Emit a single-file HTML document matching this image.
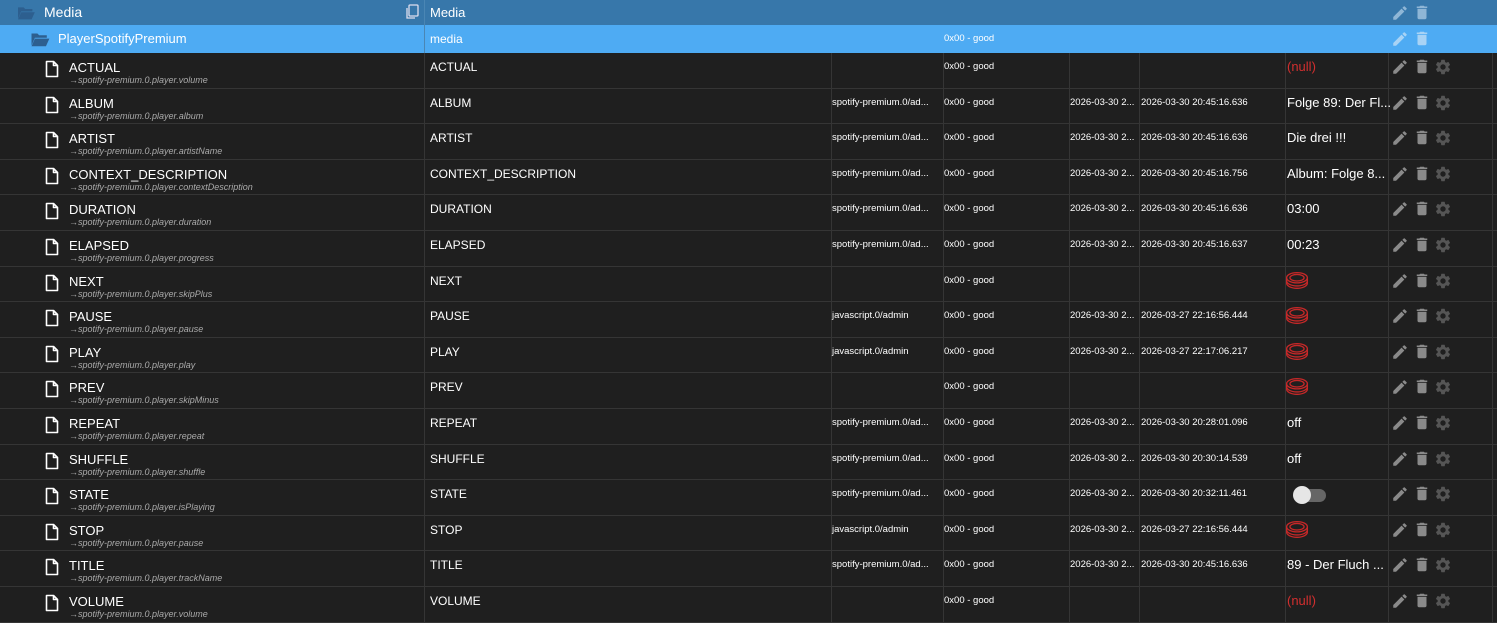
<!DOCTYPE html>
<html><head><meta charset="utf-8"><style>
*{margin:0;padding:0;box-sizing:border-box}
body{width:1497px;height:623px;background:#1f1f1f;font-family:"Segoe UI","Liberation Sans",sans-serif;color:#fff;overflow:hidden;position:relative}
.r{position:absolute;left:0;width:1497px;border-bottom:1px solid #353535}
.v{position:absolute;top:0;bottom:0;width:1px;background:#353535}
.t{position:absolute;white-space:nowrap;line-height:1}
.n{font-size:13px;left:69px;top:8px}
.s{font-size:9px;left:69px;top:23px;color:#aaa;font-style:italic}
.c2{font-size:12px;left:430px;top:8px}
.sm{font-size:9.5px;top:9px}
.val{font-size:13px;left:1287px;top:7px}
.null{color:#d32f2f}
.fi{position:absolute;left:45px;top:7px}
.ic{position:absolute;top:5px}
</style></head><body>
<svg width="0" height="0" style="position:absolute"><defs>
<symbol id="file" viewBox="0 0 14 18"><path d="M1.5 1.5h7l4 4v11h-11z M8.5 1.5v4h4" fill="none" stroke="#fff" stroke-width="1.6" stroke-linejoin="round"/></symbol>
<symbol id="pen" viewBox="0 0 24 24"><path d="M3 17.25V21h3.75L17.81 9.94l-3.75-3.75L3 17.25zM20.71 7.04a1 1 0 000-1.410l-2.34-2.34a1 1 0 00-1.41 0l-1.83 1.83 3.75 3.75 1.83-1.83z"/></symbol>
<symbol id="trash" viewBox="0 0 24 24"><path d="M6 19c0 1.1.9 2 2 2h8c1.1 0 2-.9 2-2V7H6v12zM19 4h-3.5l-1-1h-5l-1 1H5v2h14V4z"/></symbol>
<symbol id="gear" viewBox="0 0 24 24"><path d="M19.14 12.94c.04-.3.06-.61.06-.94s-.02-.64-.07-.94l2.03-1.58a.49.49 0 00.12-.61l-1.92-3.32a.49.49 0 00-.59-.22l-2.39.96c-.5-.38-1.030-.7-1.62-.94l-.36-2.54a.48.48 0 00-.48-.41h-3.84a.48.48 0 00-.47.41l-.36 2.54c-.59.24-1.13.57-1.62.94l-2.39-.96a.48.48 0 00-.59.22L2.74 8.87a.47.47 0 00.12.61l2.03 1.58c-.05.3-.09.63-.09.94s.02.64.07.94l-2.03 1.58a.49.49 0 00-.12.61l1.92 3.32c.12.22.37.29.59.22l2.39-.96c.5.38 1.03.7 1.62.94l.36 2.54c.05.24.24.41.48.41h3.84c.24 0 .44-.17.47-.41l.36-2.54c.59-.24 1.13-.56 1.62-.94l2.39.96c.22.08.47 0 .59-.22l1.92-3.32a.47.47 0 00-.12-.61l-2.01-1.58zM12 15.6A3.6 3.6 0 1112 8.4a3.6 3.6 0 010 7.2z"/></symbol>
<symbol id="btn" viewBox="0 0 22 18"><g fill="none" stroke="#c62828" stroke-width="1.2"><ellipse cx="11" cy="6" rx="9.5" ry="4.7"/><ellipse cx="11" cy="6" rx="6.5" ry="3"/><path d="M1.5 6v5c0 2.6 4.2 4.7 9.5 4.7s9.5-2.1 9.5-4.7V6"/><path d="M1.5 8.8c0 2.6 4.2 4.7 9.5 4.7s9.5-2.1 9.5-4.7"/></g></symbol>
<symbol id="folder" viewBox="0 0 24 20"><path d="M2 3h7l2 2h9v3H6L2 17z M6 9h17l-4 9H2z" fill="#2d5f8f"/></symbol>
</defs></svg>

<div class="r" style="top:0;height:25px;background:#3777aa;border-bottom:none">
<svg style="position:absolute;left:14px;top:5px" width="24" height="16"><use href="#folder"/></svg>
<div class="t" style="left:44px;top:5px;font-size:14px">Media</div>
<svg style="position:absolute;left:404px;top:4px" width="16" height="17" viewBox="0 0 16 17"><g fill="none" stroke="#dde" stroke-width="1.3"><rect x="5" y="1" width="9" height="11" rx="1"/><path d="M3 4v10h8"/></g></svg>
<div class="t" style="left:430px;top:6px;font-size:13px">Media</div>
<svg class="ic" style="left:1391px;top:4px;fill:#8fb6d6" width="18" height="18"><use href="#pen"/></svg>
<svg class="ic" style="left:1413px;top:3px;fill:#8fb6d6" width="18" height="19"><use href="#trash"/></svg>
</div>
<div class="r" style="top:25px;height:28px;background:#4eabf3;border-bottom:none">
<svg style="position:absolute;left:29px;top:6px" width="22" height="17"><use href="#folder"/></svg>
<div class="t" style="left:58px;top:7px;font-size:13px">PlayerSpotifyPremium</div>
<div class="t" style="left:430px;top:8px;font-size:12px">media</div>
<div class="t sm" style="left:944px;top:9px">0x00 - good</div>
<svg class="ic" style="left:1391px;top:5px;fill:#a8d3f5" width="18" height="18"><use href="#pen"/></svg>
<svg class="ic" style="left:1413px;top:4px;fill:#a8d3f5" width="18" height="19"><use href="#trash"/></svg>
</div>
<div style="position:absolute;left:424px;top:0;height:53px;width:1px;background:#4a86b4"></div>

<div style="position:absolute;left:0;top:53px;width:1497px;height:570px">
<div class="v" style="left:424px"></div><div class="v" style="left:831px"></div><div class="v" style="left:943px"></div><div class="v" style="left:1069px"></div><div class="v" style="left:1139px"></div><div class="v" style="left:1285px"></div><div class="v" style="left:1388px"></div><div class="v" style="left:1492px"></div>
</div>

<div class="r" style="top:53px;height:35.6px"><svg class="fi" width="14" height="18"><use href="#file"/></svg><div class="t n">ACTUAL</div><div class="t s">→spotify-premium.0.player.volume</div><div class="t c2">ACTUAL</div><div class="t sm" style="left:944px">0x00 - good</div><div class="t val null">(null)</div><svg class="ic" style="left:1391px;fill:#8a8a8a" width="18" height="18"><use href="#pen"/></svg><svg class="ic" style="left:1413px;top:4px;fill:#8a8a8a" width="18" height="19"><use href="#trash"/></svg><svg class="ic" style="left:1434px;fill:#555" width="18" height="18"><use href="#gear"/></svg></div>

<div class="r" style="top:88.6px;height:35.6px"><svg class="fi" width="14" height="18"><use href="#file"/></svg><div class="t n">ALBUM</div><div class="t s">→spotify-premium.0.player.album</div><div class="t c2">ALBUM</div><div class="t sm" style="left:832px">spotify-premium.0/ad...</div><div class="t sm" style="left:944px">0x00 - good</div><div class="t sm" style="left:1070px">2026-03-30 2...</div><div class="t sm" style="left:1141px">2026-03-30 20:45:16.636</div><div class="t val">Folge 89: Der Fl...</div><svg class="ic" style="left:1391px;fill:#8a8a8a" width="18" height="18"><use href="#pen"/></svg><svg class="ic" style="left:1413px;top:4px;fill:#8a8a8a" width="18" height="19"><use href="#trash"/></svg><svg class="ic" style="left:1434px;fill:#555" width="18" height="18"><use href="#gear"/></svg></div>

<div class="r" style="top:124.2px;height:35.6px"><svg class="fi" width="14" height="18"><use href="#file"/></svg><div class="t n">ARTIST</div><div class="t s">→spotify-premium.0.player.artistName</div><div class="t c2">ARTIST</div><div class="t sm" style="left:832px">spotify-premium.0/ad...</div><div class="t sm" style="left:944px">0x00 - good</div><div class="t sm" style="left:1070px">2026-03-30 2...</div><div class="t sm" style="left:1141px">2026-03-30 20:45:16.636</div><div class="t val">Die drei !!!</div><svg class="ic" style="left:1391px;fill:#8a8a8a" width="18" height="18"><use href="#pen"/></svg><svg class="ic" style="left:1413px;top:4px;fill:#8a8a8a" width="18" height="19"><use href="#trash"/></svg><svg class="ic" style="left:1434px;fill:#555" width="18" height="18"><use href="#gear"/></svg></div>

<div class="r" style="top:159.8px;height:35.6px"><svg class="fi" width="14" height="18"><use href="#file"/></svg><div class="t n">CONTEXT_DESCRIPTION</div><div class="t s">→spotify-premium.0.player.contextDescription</div><div class="t c2">CONTEXT_DESCRIPTION</div><div class="t sm" style="left:832px">spotify-premium.0/ad...</div><div class="t sm" style="left:944px">0x00 - good</div><div class="t sm" style="left:1070px">2026-03-30 2...</div><div class="t sm" style="left:1141px">2026-03-30 20:45:16.756</div><div class="t val">Album: Folge 8...</div><svg class="ic" style="left:1391px;fill:#8a8a8a" width="18" height="18"><use href="#pen"/></svg><svg class="ic" style="left:1413px;top:4px;fill:#8a8a8a" width="18" height="19"><use href="#trash"/></svg><svg class="ic" style="left:1434px;fill:#555" width="18" height="18"><use href="#gear"/></svg></div>

<div class="r" style="top:195.4px;height:35.6px"><svg class="fi" width="14" height="18"><use href="#file"/></svg><div class="t n">DURATION</div><div class="t s">→spotify-premium.0.player.duration</div><div class="t c2">DURATION</div><div class="t sm" style="left:832px">spotify-premium.0/ad...</div><div class="t sm" style="left:944px">0x00 - good</div><div class="t sm" style="left:1070px">2026-03-30 2...</div><div class="t sm" style="left:1141px">2026-03-30 20:45:16.636</div><div class="t val">03:00</div><svg class="ic" style="left:1391px;fill:#8a8a8a" width="18" height="18"><use href="#pen"/></svg><svg class="ic" style="left:1413px;top:4px;fill:#8a8a8a" width="18" height="19"><use href="#trash"/></svg><svg class="ic" style="left:1434px;fill:#555" width="18" height="18"><use href="#gear"/></svg></div>

<div class="r" style="top:231px;height:35.6px"><svg class="fi" width="14" height="18"><use href="#file"/></svg><div class="t n">ELAPSED</div><div class="t s">→spotify-premium.0.player.progress</div><div class="t c2">ELAPSED</div><div class="t sm" style="left:832px">spotify-premium.0/ad...</div><div class="t sm" style="left:944px">0x00 - good</div><div class="t sm" style="left:1070px">2026-03-30 2...</div><div class="t sm" style="left:1141px">2026-03-30 20:45:16.637</div><div class="t val">00:23</div><svg class="ic" style="left:1391px;fill:#8a8a8a" width="18" height="18"><use href="#pen"/></svg><svg class="ic" style="left:1413px;top:4px;fill:#8a8a8a" width="18" height="19"><use href="#trash"/></svg><svg class="ic" style="left:1434px;fill:#555" width="18" height="18"><use href="#gear"/></svg></div>

<div class="r" style="top:266.6px;height:35.6px"><svg class="fi" width="14" height="18"><use href="#file"/></svg><div class="t n">NEXT</div><div class="t s">→spotify-premium.0.player.skipPlus</div><div class="t c2">NEXT</div><div class="t sm" style="left:944px">0x00 - good</div><svg class="ic" style="left:1285px;top:4px" width="24" height="20"><use href="#btn"/></svg><svg class="ic" style="left:1391px;fill:#8a8a8a" width="18" height="18"><use href="#pen"/></svg><svg class="ic" style="left:1413px;top:4px;fill:#8a8a8a" width="18" height="19"><use href="#trash"/></svg><svg class="ic" style="left:1434px;fill:#555" width="18" height="18"><use href="#gear"/></svg></div>

<div class="r" style="top:302.2px;height:35.6px"><svg class="fi" width="14" height="18"><use href="#file"/></svg><div class="t n">PAUSE</div><div class="t s">→spotify-premium.0.player.pause</div><div class="t c2">PAUSE</div><div class="t sm" style="left:832px">javascript.0/admin</div><div class="t sm" style="left:944px">0x00 - good</div><div class="t sm" style="left:1070px">2026-03-30 2...</div><div class="t sm" style="left:1141px">2026-03-27 22:16:56.444</div><svg class="ic" style="left:1285px;top:4px" width="24" height="20"><use href="#btn"/></svg><svg class="ic" style="left:1391px;fill:#8a8a8a" width="18" height="18"><use href="#pen"/></svg><svg class="ic" style="left:1413px;top:4px;fill:#8a8a8a" width="18" height="19"><use href="#trash"/></svg><svg class="ic" style="left:1434px;fill:#555" width="18" height="18"><use href="#gear"/></svg></div>

<div class="r" style="top:337.8px;height:35.6px"><svg class="fi" width="14" height="18"><use href="#file"/></svg><div class="t n">PLAY</div><div class="t s">→spotify-premium.0.player.play</div><div class="t c2">PLAY</div><div class="t sm" style="left:832px">javascript.0/admin</div><div class="t sm" style="left:944px">0x00 - good</div><div class="t sm" style="left:1070px">2026-03-30 2...</div><div class="t sm" style="left:1141px">2026-03-27 22:17:06.217</div><svg class="ic" style="left:1285px;top:4px" width="24" height="20"><use href="#btn"/></svg><svg class="ic" style="left:1391px;fill:#8a8a8a" width="18" height="18"><use href="#pen"/></svg><svg class="ic" style="left:1413px;top:4px;fill:#8a8a8a" width="18" height="19"><use href="#trash"/></svg><svg class="ic" style="left:1434px;fill:#555" width="18" height="18"><use href="#gear"/></svg></div>

<div class="r" style="top:373.4px;height:35.6px"><svg class="fi" width="14" height="18"><use href="#file"/></svg><div class="t n">PREV</div><div class="t s">→spotify-premium.0.player.skipMinus</div><div class="t c2">PREV</div><div class="t sm" style="left:944px">0x00 - good</div><svg class="ic" style="left:1285px;top:4px" width="24" height="20"><use href="#btn"/></svg><svg class="ic" style="left:1391px;fill:#8a8a8a" width="18" height="18"><use href="#pen"/></svg><svg class="ic" style="left:1413px;top:4px;fill:#8a8a8a" width="18" height="19"><use href="#trash"/></svg><svg class="ic" style="left:1434px;fill:#555" width="18" height="18"><use href="#gear"/></svg></div>

<div class="r" style="top:409px;height:35.6px"><svg class="fi" width="14" height="18"><use href="#file"/></svg><div class="t n">REPEAT</div><div class="t s">→spotify-premium.0.player.repeat</div><div class="t c2">REPEAT</div><div class="t sm" style="left:832px">spotify-premium.0/ad...</div><div class="t sm" style="left:944px">0x00 - good</div><div class="t sm" style="left:1070px">2026-03-30 2...</div><div class="t sm" style="left:1141px">2026-03-30 20:28:01.096</div><div class="t val">off</div><svg class="ic" style="left:1391px;fill:#8a8a8a" width="18" height="18"><use href="#pen"/></svg><svg class="ic" style="left:1413px;top:4px;fill:#8a8a8a" width="18" height="19"><use href="#trash"/></svg><svg class="ic" style="left:1434px;fill:#555" width="18" height="18"><use href="#gear"/></svg></div>

<div class="r" style="top:444.6px;height:35.6px"><svg class="fi" width="14" height="18"><use href="#file"/></svg><div class="t n">SHUFFLE</div><div class="t s">→spotify-premium.0.player.shuffle</div><div class="t c2">SHUFFLE</div><div class="t sm" style="left:832px">spotify-premium.0/ad...</div><div class="t sm" style="left:944px">0x00 - good</div><div class="t sm" style="left:1070px">2026-03-30 2...</div><div class="t sm" style="left:1141px">2026-03-30 20:30:14.539</div><div class="t val">off</div><svg class="ic" style="left:1391px;fill:#8a8a8a" width="18" height="18"><use href="#pen"/></svg><svg class="ic" style="left:1413px;top:4px;fill:#8a8a8a" width="18" height="19"><use href="#trash"/></svg><svg class="ic" style="left:1434px;fill:#555" width="18" height="18"><use href="#gear"/></svg></div>

<div class="r" style="top:480.2px;height:35.6px"><svg class="fi" width="14" height="18"><use href="#file"/></svg><div class="t n">STATE</div><div class="t s">→spotify-premium.0.player.isPlaying</div><div class="t c2">STATE</div><div class="t sm" style="left:832px">spotify-premium.0/ad...</div><div class="t sm" style="left:944px">0x00 - good</div><div class="t sm" style="left:1070px">2026-03-30 2...</div><div class="t sm" style="left:1141px">2026-03-30 20:32:11.461</div><div style="position:absolute;left:1298px;top:9px;width:28px;height:13px;border-radius:7px;background:#666"></div><div style="position:absolute;left:1293px;top:6px;width:18px;height:18px;border-radius:9px;background:#e6e6e6"></div><svg class="ic" style="left:1391px;fill:#8a8a8a" width="18" height="18"><use href="#pen"/></svg><svg class="ic" style="left:1413px;top:4px;fill:#8a8a8a" width="18" height="19"><use href="#trash"/></svg><svg class="ic" style="left:1434px;fill:#555" width="18" height="18"><use href="#gear"/></svg></div>

<div class="r" style="top:515.8px;height:35.6px"><svg class="fi" width="14" height="18"><use href="#file"/></svg><div class="t n">STOP</div><div class="t s">→spotify-premium.0.player.pause</div><div class="t c2">STOP</div><div class="t sm" style="left:832px">javascript.0/admin</div><div class="t sm" style="left:944px">0x00 - good</div><div class="t sm" style="left:1070px">2026-03-30 2...</div><div class="t sm" style="left:1141px">2026-03-27 22:16:56.444</div><svg class="ic" style="left:1285px;top:4px" width="24" height="20"><use href="#btn"/></svg><svg class="ic" style="left:1391px;fill:#8a8a8a" width="18" height="18"><use href="#pen"/></svg><svg class="ic" style="left:1413px;top:4px;fill:#8a8a8a" width="18" height="19"><use href="#trash"/></svg><svg class="ic" style="left:1434px;fill:#555" width="18" height="18"><use href="#gear"/></svg></div>

<div class="r" style="top:551.4px;height:35.6px"><svg class="fi" width="14" height="18"><use href="#file"/></svg><div class="t n">TITLE</div><div class="t s">→spotify-premium.0.player.trackName</div><div class="t c2">TITLE</div><div class="t sm" style="left:832px">spotify-premium.0/ad...</div><div class="t sm" style="left:944px">0x00 - good</div><div class="t sm" style="left:1070px">2026-03-30 2...</div><div class="t sm" style="left:1141px">2026-03-30 20:45:16.636</div><div class="t val">89 - Der Fluch ...</div><svg class="ic" style="left:1391px;fill:#8a8a8a" width="18" height="18"><use href="#pen"/></svg><svg class="ic" style="left:1413px;top:4px;fill:#8a8a8a" width="18" height="19"><use href="#trash"/></svg><svg class="ic" style="left:1434px;fill:#555" width="18" height="18"><use href="#gear"/></svg></div>

<div class="r" style="top:587px;height:35.6px"><svg class="fi" width="14" height="18"><use href="#file"/></svg><div class="t n">VOLUME</div><div class="t s">→spotify-premium.0.player.volume</div><div class="t c2">VOLUME</div><div class="t sm" style="left:944px">0x00 - good</div><div class="t val null">(null)</div><svg class="ic" style="left:1391px;fill:#8a8a8a" width="18" height="18"><use href="#pen"/></svg><svg class="ic" style="left:1413px;top:4px;fill:#8a8a8a" width="18" height="19"><use href="#trash"/></svg><svg class="ic" style="left:1434px;fill:#555" width="18" height="18"><use href="#gear"/></svg></div>
</body></html>
